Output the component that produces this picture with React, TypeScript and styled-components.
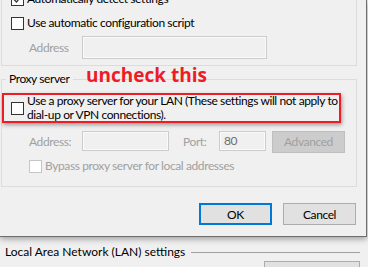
import React from "react";
import styled, { createGlobalStyle } from "styled-components";

const Global = createGlobalStyle`
  html, body { margin: 0; padding: 0; background: #f0f0f0; overflow: hidden; }
  body { width: 368px; height: 267px; font-family: Lato, "Noto Sans", sans-serif; font-size: 12px; color: #000; }
`;

const Page = styled.div`
  width: 368px;
  height: 267px;
  display: flex;
  flex-direction: column;
  background: #f0f0f0;
`;

const Dialog = styled.div`
  position: relative;
  flex: none;
  width: 367px;
  height: 237px;
  box-sizing: border-box;
  border-right: 1px solid #6e6e6e;
  border-bottom: 1px solid #6e6e6e;
  box-shadow: 0 2px 6px rgba(0,0,0,0.35);
  background: #f0f0f0;
  padding-left: 1px;
  overflow: hidden;
  z-index: 1;
  letter-spacing: -0.4px;
`;

const Group = styled.div<{ $top: number; $height: number }>`
  position: relative;
  flex: none;
  margin-top: ${(p) => p.$top}px;
  width: 356px;
  height: ${(p) => p.$height}px;
  box-sizing: border-box;
  border: 1px solid #dcdcdc;
  display: flex;
  flex-direction: column;
`;

const Legend = styled.span`
  position: absolute;
  left: 4px;
  top: -10px;
  padding: 0 3px;
  background: #f0f0f0;
  line-height: 18px;
`;

const Row = styled.div<{ $indent: number; $mt: number; $gap?: number; $top?: boolean }>`
  display: flex;
  align-items: ${(p) => (p.$top ? "flex-start" : "center")};
  margin-left: ${(p) => p.$indent}px;
  margin-top: ${(p) => p.$mt}px;
  gap: ${(p) => p.$gap ?? 3}px;
  line-height: 14px;
  white-space: nowrap;
`;

const Box = styled.span<{ $disabled?: boolean }>`
  flex: none;
  width: 13px;
  height: 13px;
  box-sizing: border-box;
  border: 1px solid ${(p) => (p.$disabled ? "#c6c6c6" : "#333")};
  background: #fff;
  display: flex;
  align-items: center;
  justify-content: center;
`;

const Label = styled.span<{ $disabled?: boolean; $w?: number; $ml?: number }>`
  flex: none;
  color: ${(p) => (p.$disabled ? "#a0a0a0" : "#000")};
  width: ${(p) => (p.$w ? `${p.$w}px` : "auto")};
  margin-left: ${(p) => p.$ml ?? 0}px;
  align-self: center;
`;

const Input = styled.div<{ $w: number; $h: number }>`
  flex: none;
  width: ${(p) => p.$w}px;
  height: ${(p) => p.$h}px;
  box-sizing: border-box;
  border: 1px solid #cccccc;
  box-shadow: inset 0 0 0 1px #fafafa;
  background: #f0f0f0;
  color: #6d6d6d;
  padding-left: 4px;
  display: flex;
  align-items: center;
`;

const GrayButton = styled.div`
  flex: none;
  width: 73px;
  height: 22px;
  box-sizing: border-box;
  border: 1px solid #bfbfbf;
  background: #cccccc;
  color: #a0a0a0;
  display: flex;
  align-items: center;
  justify-content: center;
  margin-left: 6px;
`;

const Highlight = styled.div`
  flex: none;
  margin-top: 13px;
  width: 339px;
  height: 30px;
  box-sizing: border-box;
  border: 2px solid #ee1c25;
  box-shadow: 1px 2px 4px rgba(0,0,0,0.35);
  display: flex;
  align-items: center;
  padding: 0 0 0 7px;
  gap: 3px;
  line-height: 14px;
  white-space: nowrap;
`;

const Annotation = styled.span`
  position: absolute;
  left: 86px;
  top: 63px;
  color: #ee1c25;
  font-family: "Open Sans", "Noto Sans", sans-serif;
  font-weight: 700;
  font-size: 19px;
  line-height: 24px;
  letter-spacing: 0;
`;

const Buttons = styled.div`
  display: flex;
  gap: 11px;
  margin-top: 16px;
  margin-left: 198px;
`;

const Button = styled.div<{ $default?: boolean }>`
  width: 73px;
  height: 22px;
  box-sizing: border-box;
  border: ${(p) => (p.$default ? "2px solid #0078d7" : "1px solid #adadad")};
  background: #e1e1e1;
  display: flex;
  align-items: center;
  justify-content: center;
`;

const Parent = styled.div`
  flex: 1;
  background: #f0f0f0;
  display: flex;
  flex-direction: column;
`;

const SectionTitle = styled.div`
  display: flex;
  align-items: center;
  margin-top: 7px;
  padding-left: 5px;
  gap: 6px;
  line-height: 16px;
  white-space: nowrap;
  &::after {
    content: "";
    flex: 1;
    margin-right: 8px;
    height: 1px;
    background: #a0a0a0;
  }
`;

const ParentButton = styled.div`
  margin-left: 264px;
  margin-top: 1px;
  width: 96px;
  height: 10px;
  box-sizing: border-box;
  border: 1px solid #adadad;
  border-bottom: none;
  background: #e1e1e1;
`;

const Check = () => (
  <svg width="9" height="9" viewBox="0 0 9 9">
    <path d="M1 4.5 L3.5 7 L8 1.5" fill="none" stroke="#333" strokeWidth="1.3" />
  </svg>
);

export default function App() {
  return (
    <Page>
      <Global />
      <Dialog>
        <Group $top={-20} $height={86}>
          <Row $indent={9} $mt={11}>
            <Box><Check /></Box>
            <Label>Automatically detect settings</Label>
          </Row>
          <Row $indent={9} $mt={10}>
            <Box />
            <Label>Use automatic configuration script</Label>
          </Row>
          <Row $indent={27} $mt={6} $gap={0}>
            <Label $disabled $w={53}>Address</Label>
            <Input $w={185} $h={23} />
          </Row>
        </Group>
        <Group $top={13} $height={108}>
          <Legend>Proxy server</Legend>
          <Highlight>
            <Box />
            <span>
              Use a proxy server for your LAN (These settings will not apply to
              <br />
              dial-up or VPN connections).
            </span>
          </Highlight>
          <Row $indent={27} $mt={8} $gap={0} $top>
            <Label $disabled $w={53}>Address:</Label>
            <Input $w={87} $h={20} />
            <Label $disabled $w={36} $ml={14}>Port:</Label>
            <Input $w={47} $h={20}>80</Input>
            <GrayButton>Advanced</GrayButton>
          </Row>
          <Row $indent={27} $mt={6}>
            <Box $disabled />
            <Label $disabled>Bypass proxy server for local addresses</Label>
          </Row>
        </Group>
        <Annotation>uncheck this</Annotation>
        <Buttons>
          <Button $default>OK</Button>
          <Button>Cancel</Button>
        </Buttons>
      </Dialog>
      <Parent>
        <SectionTitle>Local Area Network (LAN) settings</SectionTitle>
        <ParentButton />
      </Parent>
    </Page>
  );
}
